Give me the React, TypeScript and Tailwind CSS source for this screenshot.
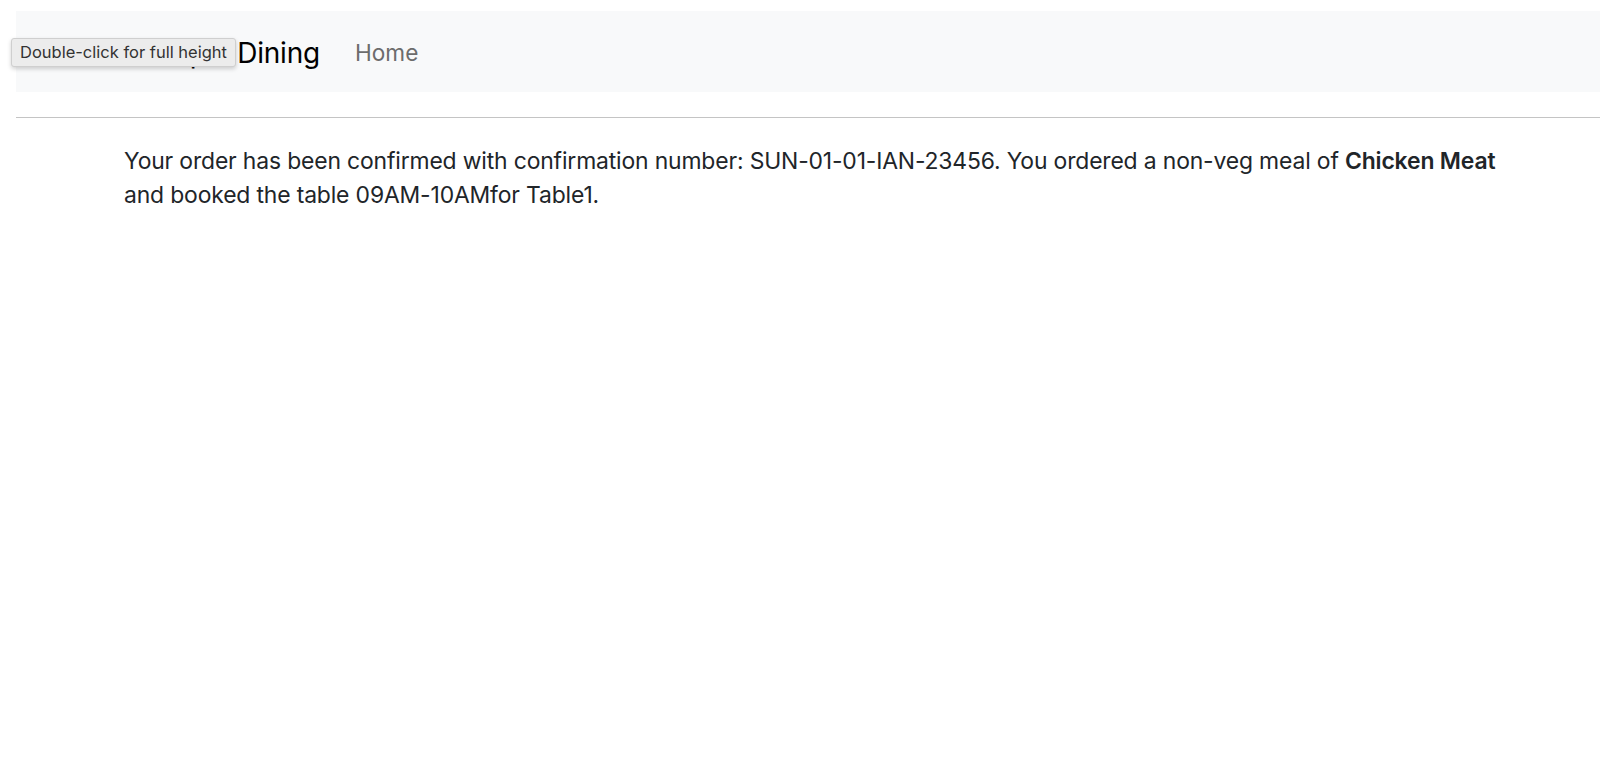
export default function App() {
  return (
    <div
      className="relative min-h-[758px] bg-white pl-[16px] text-[#212529]"
      style={{ fontFamily: 'Inter, "Noto Sans", sans-serif' }}
    >
      <div className="h-[11px]" />
      <nav className="flex h-[81px] items-center bg-[#f8f9fa] pt-[3px]">
        <a className="block w-[304px] text-right text-[28px] leading-none tracking-[-0.2px] text-black">
          Sample Dining
        </a>
        <a className="ml-[35px] text-[22.6px] leading-none text-[#6c6c6c]">Home</a>
      </nav>
      <div className="h-[25px]" />
      <hr className="border-0 border-t border-[#c4c4c4]" />
      <div className="pt-[26px] pl-[108px]">
        <p className="text-[22.9px] leading-[34px] tracking-[-0.15px]">
          Your order has been confirmed with confirmation number: SUN-01-01-IAN-23456. You ordered a
          non-veg meal of <b className="font-semibold">Chicken Meat</b>
          <br />
          and booked the table 09AM-10AMfor Table1.
        </p>
      </div>

      <div className="absolute left-[11px] top-[38px] flex h-[29px] items-center rounded-[3px] border border-[#cfcfcf] bg-[#ececec] px-[8px] text-[16.5px] text-[#333] shadow-[0_2px_4px_rgba(0,0,0,0.18)]">
        Double-click for full height
      </div>
    </div>
  );
}
